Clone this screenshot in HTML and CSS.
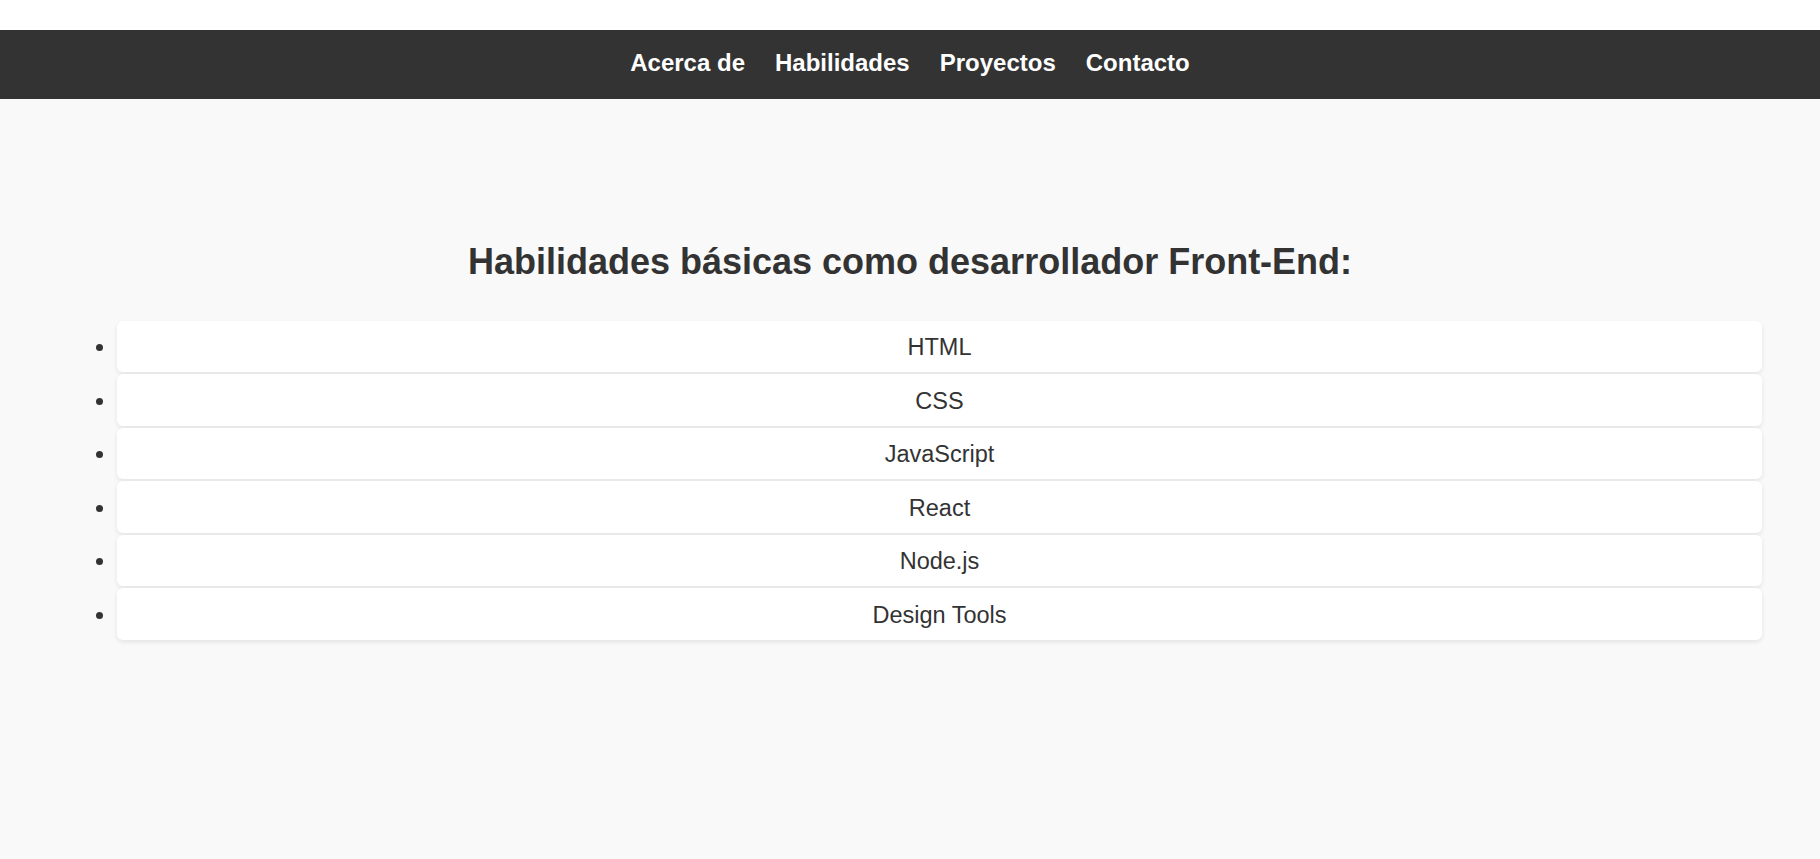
FILE: index.html
```html
<!DOCTYPE html>
<html lang="es">
<head>
<meta charset="utf-8">
<title>Habilidades</title>
<link rel="stylesheet" href="styles.css">
</head>
<body>
<header class="site-header">
  <nav class="main-nav">
    <a href="#acerca">Acerca de</a>
    <a href="#habilidades">Habilidades</a>
    <a href="#proyectos">Proyectos</a>
    <a href="#contacto">Contacto</a>
  </nav>
</header>
<main class="content">
  <section class="skills" id="habilidades">
    <h2 class="skills-title">Habilidades básicas como desarrollador Front-End:</h2>
    <ul class="skills-list">
      <li class="skill">HTML</li>
      <li class="skill">CSS</li>
      <li class="skill">JavaScript</li>
      <li class="skill">React</li>
      <li class="skill">Node.js</li>
      <li class="skill">Design Tools</li>
    </ul>
  </section>
</main>
</body>
</html>
```
FILE: styles.css
```css
html, body {
  margin: 0;
  padding: 0;
  background: #ffffff;
  font-family: "Liberation Sans", Arial, sans-serif;
  color: #333333;
}

.site-header {
  margin-top: 30px;
  background: #333333;
}

.main-nav {
  display: flex;
  justify-content: center;
  gap: 30px;
  padding: 20px 0 22px;
}

.main-nav a {
  color: #ffffff;
  text-decoration: none;
  font-weight: bold;
  font-size: 24px;
  line-height: 1.117;
}

.content {
  box-sizing: border-box;
  background: #f9f9f9;
  min-height: 760px;
  padding-top: 143px;
}

.skills {
  padding: 0 58px;
}

.skills-title {
  margin: 0 0 39px;
  text-align: center;
  font-size: 36px;
  font-weight: bold;
  line-height: 1.117;
  color: #333333;
}

.skills-list {
  margin: 0;
  padding-left: 59px;
  list-style: disc;
}

.skill {
  background: #ffffff;
  border-radius: 6px;
  box-shadow: 0 2px 5px rgba(0, 0, 0, 0.09);
  margin-bottom: 2px;
  padding: 13.25px 0 12px;
  text-align: center;
  font-size: 23.5px;
  line-height: 1.117;
  color: #333333;
}
```
